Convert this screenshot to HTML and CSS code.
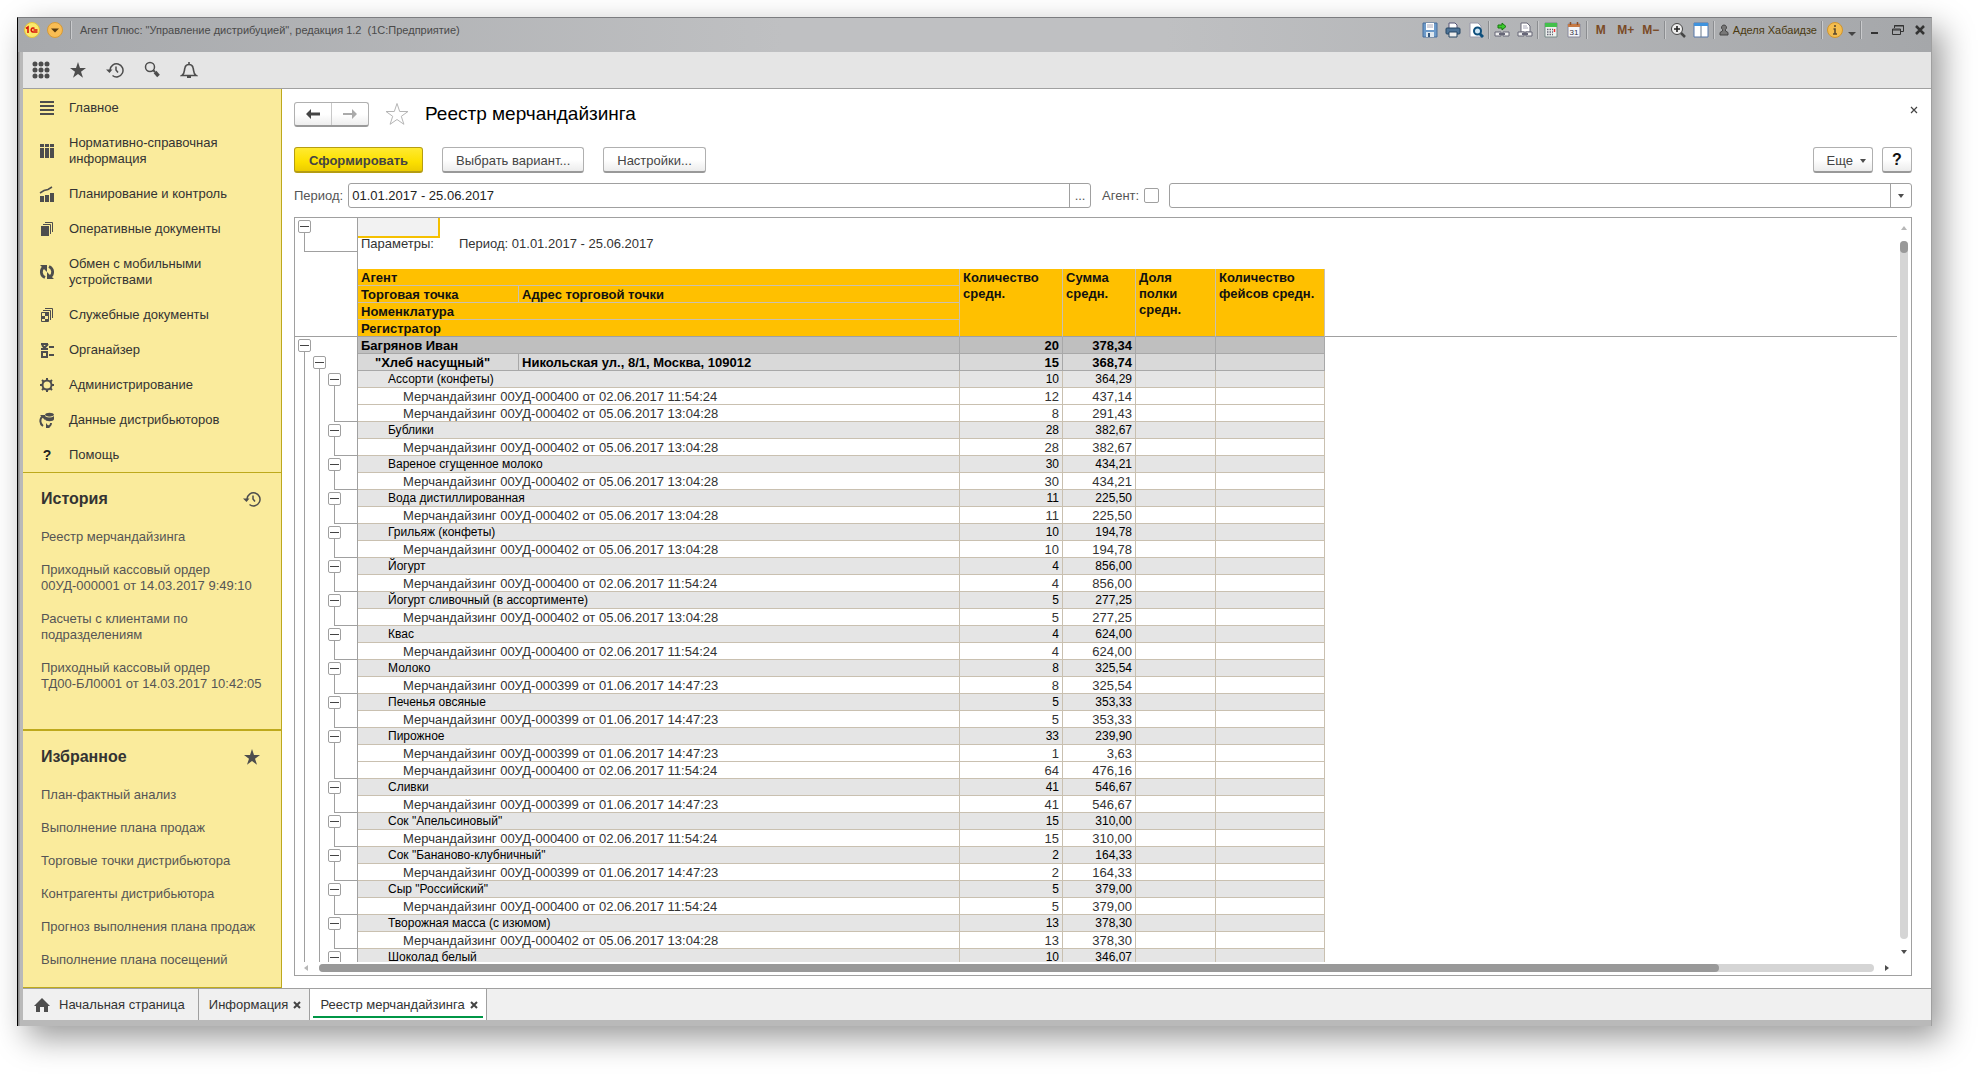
FILE: index.html
```html
<!DOCTYPE html>
<html lang="ru">
<head>
  <meta charset="UTF-8">
  <meta name="viewport" content="width=device-width, initial-scale=1.0">
  <title>Реестр мерчандайзинга</title>
  <link rel="stylesheet" href="styles.css">
</head>
<body>
  <!-- Shared icons -->
  <svg class="sprite" aria-hidden="true">
    <symbol id="star" viewBox="0 0 18 18"><path d="M9 1l2 6h6l-5 3.700 2 6-5-3.700-5 3.700 2-6-5-3.700h6z"/></symbol>
    <symbol id="clock" viewBox="0 0 18 18"><path d="M4 9a6.500 6.500 0 1 1 2.500 5.500M10 5.500V9l2 2.500" fill="none" stroke="#4d4d4d" stroke-width="1.500"/><path d="M0 8.500h6.500L3.500 12z"/></symbol>
    <symbol id="cross" viewBox="0 0 8 8"><path d="M1 1l6 6m0-6L1 7" fill="none" stroke="#444" stroke-width="2"/></symbol>
    <symbol id="down" viewBox="0 0 6 4"><path d="M0 0h6L3 4z"/></symbol>
  </svg>

  <div class="window">
    <!-- Title bar -->
    <header class="titlebar">
      <svg class="logo" viewBox="0 0 16 16"><circle cx="8" cy="8" r="7.500" fill="#fbe96b" stroke="#e3c33c"/><path d="M2 6.500l2-1.500v6M10.500 6.500A2 2 0 1 0 9 10h4.500M9.500 8h4" fill="none" stroke="#d8130b" stroke-width="1.600"/></svg>
      <button class="round" aria-label="Меню"><svg viewBox="0 0 16 16"><circle cx="8" cy="8" r="7.500" fill="#f9bd54" stroke="#d69a38"/><path d="M4 6.500h8l-4 4z" fill="#5a3c10"/></svg></button>
      <i class="sep"></i>
      <span class="app-name">Агент Плюс: "Управление дистрибуцией", редакция 1.2&nbsp; (1С:Предприятие)</span>
      <div class="tools">
        <button aria-label="Сохранить"><svg viewBox="0 0 16 16"><path d="M1 1h14v14H1z" fill="#6d9ac9" stroke="#476d9b"/><path d="M4 1h8v7H4z" fill="#fff"/><path d="M5 3h6M5 5h6" stroke="#aab"/><path d="M4 10h8v5H4z" fill="#dfe8ef"/><path d="M6 11h2v4H6z" fill="#36587f"/></svg></button>
        <button aria-label="Печать"><svg viewBox="0 0 16 16"><path d="M4 1h6l2 2v4H4z" fill="#fff" stroke="#557"/><rect x="1" y="6" width="14" height="6" rx="1" fill="#4d7397" stroke="#264764"/><path d="M4 10h8v5H4z" fill="#eee" stroke="#264764"/></svg></button>
        <button aria-label="Просмотр"><svg viewBox="0 0 16 16"><path d="M2 1h8l3 3v11H2z" fill="#fff" stroke="#99a"/><circle cx="9.500" cy="9" r="3.500" fill="#cfe6f4" stroke="#0d4f7c" stroke-width="2"/><path d="M12 12l3 3" stroke="#0d4f7c" stroke-width="3"/></svg></button>
        <i class="sep"></i>
        <button aria-label="Получить ссылку"><svg viewBox="0 0 16 16"><path d="M1 10h6v4H1zM9 10h6v4H9z" fill="#eee" stroke="#667"/><path d="M5 12h6" stroke="#667" stroke-width="2"/><path d="M4 3h4V1l4 3.500L8 8V6H4z" fill="#3ccb2d" stroke="#16780e"/></svg></button>
        <button aria-label="Перейти по ссылке"><svg viewBox="0 0 16 16"><path d="M4 1h6l3 3v6H4z" fill="#fff" stroke="#667"/><path d="M6 4h4M6 6h5" stroke="#aab"/><path d="M1 10h6v4H1zM9 10h6v4H9z" fill="#eee" stroke="#667"/><path d="M5 12h6" stroke="#667" stroke-width="2"/></svg></button>
        <i class="sep"></i>
        <button aria-label="Калькулятор"><svg viewBox="0 0 16 16"><path d="M2 1h12v14H2z" fill="#eef1ee" stroke="#788"/><path d="M2 1h12v4H2z" fill="#43c04c"/><path d="M4 7.500h6M4 10h6M4 12.500h6" stroke="#667" stroke-width="1.500" stroke-dasharray="1.500 1"/><path d="M11.500 7v3" stroke="#e33" stroke-width="1.500"/></svg></button>
        <button aria-label="Календарь"><svg viewBox="0 0 16 16"><path d="M2 2h12v13H2z" fill="#f4f6fa" stroke="#889"/><path d="M2 2h12v3H2z" fill="#c67a45"/><path d="M4.500 0v3M11.500 0v3" stroke="#8a4e26" stroke-width="1.500"/><text class="day" x="8" y="13">31</text></svg></button>
        <i class="sep"></i>
        <button class="mem">M</button>
        <button class="mem">M+</button>
        <button class="mem">M−</button>
        <i class="sep"></i>
        <button aria-label="Масштаб"><svg viewBox="0 0 16 16"><circle cx="7" cy="7" r="5.500" fill="#eee" stroke="#444"/><path d="M4 7h6M7 4v6" stroke="#222" stroke-width="1.600"/><path d="M11 11l4 4" stroke="#444" stroke-width="2.500"/></svg></button>
        <button aria-label="Панели"><svg viewBox="0 0 16 16"><path d="M1 1h14v14H1z" fill="#fff" stroke="#57a"/><path d="M1 1h14v3H1z" fill="#3f93de"/><path d="M8 4v11" stroke="#678"/></svg></button>
        <i class="sep"></i>
        <a class="user" href="#"><svg viewBox="0 0 10 12"><path d="M5 1a2.500 2.500 0 0 1 1.500 4.500V7L9 8.500V11H1V8.500L3.500 7V5.500A2.500 2.500 0 0 1 5 1z" fill="#777" stroke="#444"/></svg>Аделя Хабаидзе</a>
        <i class="sep"></i>
        <button aria-label="Информация"><svg viewBox="0 0 16 16"><circle cx="8" cy="8" r="7.500" fill="#f4bd4e" stroke="#cf9430"/><path d="M8 3v2M6.500 7H8v5M6 12h4" fill="none" stroke="#5b4a30" stroke-width="1.600"/></svg></button>
        <button class="slim" aria-label="Еще"><svg viewBox="0 0 8 16"><path d="M0 10h8l-4 4z" fill="#444"/></svg></button>
        <i class="sep"></i>
        <button class="win" aria-label="Свернуть"><svg viewBox="0 0 16 16"><path d="M5 11h7" stroke="#333" stroke-width="2"/></svg></button>
        <button class="win" aria-label="Восстановить"><svg viewBox="0 0 16 16"><path d="M5.500 6V3.500h9v6H12M5 4h10M3.500 7h8v5.500h-8zM3 8h9" fill="none" stroke="#333"/></svg></button>
        <button class="win" aria-label="Закрыть"><svg viewBox="0 0 16 16"><path d="M4 4l8 8m0-8l-8 8" stroke="#333" stroke-width="2.500"/></svg></button>
      </div>
    </header>

    <!-- Toolbar -->
    <nav class="toolbar">
      <button aria-label="Функции"><svg viewBox="0 0 18 18"><path d="M3 3h0m6 0h0m6 0h0M3 9h0m6 0h0m6 0h0M3 15h0m6 0h0m6 0h0" stroke="#4d4d4d" stroke-width="5" stroke-linecap="round"/></svg></button>
      <button aria-label="Избранное"><svg><use href="#star"/></svg></button>
      <button aria-label="История"><svg><use href="#clock"/></svg></button>
      <button aria-label="Поиск"><svg viewBox="0 0 18 18"><circle cx="7" cy="6" r="4.500" fill="none" stroke="#4d4d4d" stroke-width="1.500"/><path d="M10 9l2 2" stroke="#4d4d4d" stroke-width="2"/><path d="M12 11l3.500 4" stroke="#4d4d4d" stroke-width="3.500"/></svg></button>
      <button aria-label="Оповещения"><svg viewBox="0 0 18 18"><path d="M2 14.500c3-2 2-5 3-8 .500-2 2-3 4-3s3.500 1 4 3c1 3 0 6 3 8zM9 1v2" fill="none" stroke="#4d4d4d" stroke-width="1.600"/><path d="M7 15h4v2H7z"/></svg></button>
    </nav>

    <div class="workspace">
      <aside class="sidebar">
        <nav class="sections">
          <a href="#"><svg viewBox="0 0 16 16"><path d="M1 1h14v2H1zM1 5h14v2H1zM1 9h14v2H1zM1 13h14v2H1z"/></svg>Главное</a>
          <a href="#"><svg viewBox="0 0 16 16"><path d="M1 1h4v3H1zM6 1h4v3H6zM11 1h4v3h-4zM1 5h4v10H1zM6 5h4v10H6zM11 5h4v10h-4z"/></svg>Нормативно-справочная информация</a>
          <a href="#"><svg viewBox="0 0 16 16"><path d="M1 10h4v6H1zM6 9h4v7H6zM11 7h4v9h-4z"/><path d="M1 7l4-2.500 4-1 4-2.500" fill="none" stroke="#4d4d4d" stroke-width="1.500"/></svg>Планирование и контроль</a>
          <a href="#"><svg viewBox="0 0 16 16"><path d="M2 5h8v10H2z"/><path d="M4 3.500h7.500V13M6 1.500h7.500V11" fill="none" stroke="#4d4d4d"/></svg>Оперативные документы</a>
          <a href="#"><svg viewBox="0 0 16 16"><path d="M5 3a6 6 0 0 0 1 10.500M11 13A6 6 0 0 0 10 2.500" fill="none" stroke="#4d4d4d" stroke-width="2.800"/><path d="M1 1h7v7zM15 15H8V8z"/></svg>Обмен с мобильными устройствами</a>
          <a href="#"><svg viewBox="0 0 16 16"><path d="M2.500 5.500h7v9h-7z" fill="none" stroke="#4d4d4d"/><path d="M6 5h4v4H6zM3 9h3v3H3zM6 12h3v2H6z"/><path d="M4 3.500h7.500V13M6 1.500h7.500V11" fill="none" stroke="#4d4d4d"/></svg>Служебные документы</a>
          <a href="#"><svg viewBox="0 0 16 16"><path d="M3 10h5v5H3z" fill="none" stroke="#4d4d4d" stroke-width="2"/><path d="M2 2h7M2 7h7M3 3l2.500 3L9 2M10 5h5M10 13h5" fill="none" stroke="#4d4d4d" stroke-width="2"/></svg>Органайзер</a>
          <a href="#"><svg viewBox="0 0 16 16"><circle cx="8" cy="8" r="4.500" fill="none" stroke="#4d4d4d" stroke-width="2"/><path d="M8 1v2M8 13v2M1 8h2M13 8h2M3 3l1.500 1.500M11.500 11.500L13 13M13 3l-1.500 1.500M4.500 11.500L3 13" stroke="#4d4d4d" stroke-width="2"/></svg>Администрирование</a>
          <a href="#"><svg viewBox="0 0 16 16"><path d="M6 3c0-3 9-3 9 0v4c0 3-9 3-9 0z"/><path d="M6 3.500c2 2 7 2 9 0" fill="none" stroke="#faeb9c"/><path d="M4 4C0 7 1 12 4 14M12 11c0 3-2 3.500-4 3" fill="none" stroke="#4d4d4d" stroke-width="2"/><path d="M1 3h5v5zM7 11v5h4z"/></svg>Данные дистрибьюторов</a>
          <a href="#"><b class="question">?</b>Помощь</a>
        </nav>
        <section class="panel history">
          <h2>История <svg><use href="#clock"/></svg></h2>
          <a href="#">Реестр мерчандайзинга</a>
          <a href="#">Приходный кассовый ордер 00УД-000001 от 14.03.2017 9:49:10</a>
          <a href="#">Расчеты с клиентами по подразделениям</a>
          <a href="#">Приходный кассовый ордер<br>ТД00-БЛ0001 от 14.03.2017 10:42:05</a>
        </section>
        <section class="panel">
          <h2>Избранное <svg><use href="#star"/></svg></h2>
          <a href="#">План-фактный анализ</a>
          <a href="#">Выполнение плана продаж</a>
          <a href="#">Торговые точки дистрибьютора</a>
          <a href="#">Контрагенты дистрибьютора</a>
          <a href="#">Прогноз выполнения плана продаж</a>
          <a href="#">Выполнение плана посещений</a>
        </section>
      </aside>

      <main class="page">
        <div class="heading">
          <div class="arrows">
            <button aria-label="Назад"><svg viewBox="0 0 14 10"><path d="M5 0v3.500h9v3H5V10L0 5z" fill="#444"/></svg></button>
            <button aria-label="Вперед"><svg viewBox="0 0 14 10"><path d="M9 0v4H0v2h9v4l5-5z" fill="#aaa"/></svg></button>
          </div>
          <svg class="fav" viewBox="0 0 24 24"><path d="M12 1.500l2.700 8H23l-6.700 4.800 2.600 8L12 17.500l-6.900 4.800 2.600-8L1 9.500h8.300z" fill="#fff" stroke="#b5b5b5"/></svg>
          <h1>Реестр мерчандайзинга</h1>
          <button class="close" aria-label="Закрыть"><svg viewBox="0 0 8 8"><path d="M1 1l6 6m0-6L1 7" stroke="#444" stroke-width="1.200"/></svg></button>
        </div>

        <div class="commands">
          <button class="btn primary">Сформировать</button>
          <button class="btn">Выбрать вариант...</button>
          <button class="btn">Настройки...</button>
          <button class="btn more">Еще <svg><use href="#down"/></svg></button>
          <button class="btn help">?</button>
        </div>

        <form class="filters">
          <label for="period">Период:</label>
          <div class="field">
            <input type="text" id="period" value="01.01.2017 - 25.06.2017">
            <button type="button" aria-label="Выбрать период">...</button>
          </div>
          <label class="agent-label" for="use-agent">Агент:</label>
          <input type="checkbox" id="use-agent">
          <div class="field">
            <input type="text" aria-label="Агент">
            <button type="button" class="drop" aria-label="Выбрать агента"><svg><use href="#down"/></svg></button>
          </div>
        </form>

        <!-- Report -->
        <div class="sheet">
          <div class="grid">
            <table class="report">
              <colgroup>
                <col class="c-tree"><col class="c-name"><col class="c-address"><col class="c-qty"><col class="c-sum"><col class="c-share"><col class="c-faces"><col>
              </colgroup>
              <thead>
                <tr class="blank"><td class="tree l1 box"><button></button></td><td colspan="7"><div class="selected"></div></td></tr>
                <tr class="blank"><td class="tree l1 end"></td><td colspan="7"><span class="param">Параметры:</span>Период: 01.01.2017 - 25.06.2017</td></tr>
                <tr class="blank"><td class="tree"></td><td colspan="7"></td></tr>
                <tr><td class="tree"></td><th colspan="2">Агент</th><th rowspan="4">Количество средн.</th><th rowspan="4">Сумма средн.</th><th rowspan="4">Доля полки средн.</th><th rowspan="4">Количество фейсов средн.</th><td class="void"></td></tr>
                <tr><td class="tree"></td><th>Торговая точка</th><th>Адрес торговой точки</th><td class="void"></td></tr>
                <tr><td class="tree"></td><th colspan="2">Номенклатура</th><td class="void"></td></tr>
                <tr class="freeze"><td class="tree"></td><th colspan="2">Регистратор</th><td class="void"></td></tr>
              </thead>
              <tbody>
                <tr class="agent"><td class="tree l1 box"><button></button></td><td colspan="2">Багрянов Иван</td><td>20</td><td>378,34</td><td></td><td></td></tr>
                <tr class="store"><td class="tree l2 box"><button></button></td><td>"Хлеб насущный"</td><td>Никольская ул., 8/1, Москва, 109012</td><td>15</td><td>368,74</td><td></td><td></td></tr>
                <tr class="item"><td class="tree l3 box"><button></button></td><td colspan="2">Ассорти (конфеты)</td><td>10</td><td>364,29</td><td></td><td></td></tr>
                <tr class="doc"><td class="tree l3"></td><td colspan="2">Мерчандайзинг 00УД-000400 от 02.06.2017 11:54:24</td><td>12</td><td>437,14</td><td></td><td></td></tr>
                <tr class="doc"><td class="tree l3 end"></td><td colspan="2">Мерчандайзинг 00УД-000402 от 05.06.2017 13:04:28</td><td>8</td><td>291,43</td><td></td><td></td></tr>
                <tr class="item"><td class="tree l3 box"><button></button></td><td colspan="2">Бублики</td><td>28</td><td>382,67</td><td></td><td></td></tr>
                <tr class="doc"><td class="tree l3 end"></td><td colspan="2">Мерчандайзинг 00УД-000402 от 05.06.2017 13:04:28</td><td>28</td><td>382,67</td><td></td><td></td></tr>
                <tr class="item"><td class="tree l3 box"><button></button></td><td colspan="2">Вареное сгущенное молоко</td><td>30</td><td>434,21</td><td></td><td></td></tr>
                <tr class="doc"><td class="tree l3 end"></td><td colspan="2">Мерчандайзинг 00УД-000402 от 05.06.2017 13:04:28</td><td>30</td><td>434,21</td><td></td><td></td></tr>
                <tr class="item"><td class="tree l3 box"><button></button></td><td colspan="2">Вода дистиллированная</td><td>11</td><td>225,50</td><td></td><td></td></tr>
                <tr class="doc"><td class="tree l3 end"></td><td colspan="2">Мерчандайзинг 00УД-000402 от 05.06.2017 13:04:28</td><td>11</td><td>225,50</td><td></td><td></td></tr>
                <tr class="item"><td class="tree l3 box"><button></button></td><td colspan="2">Грильяж (конфеты)</td><td>10</td><td>194,78</td><td></td><td></td></tr>
                <tr class="doc"><td class="tree l3 end"></td><td colspan="2">Мерчандайзинг 00УД-000402 от 05.06.2017 13:04:28</td><td>10</td><td>194,78</td><td></td><td></td></tr>
                <tr class="item"><td class="tree l3 box"><button></button></td><td colspan="2">Йогурт</td><td>4</td><td>856,00</td><td></td><td></td></tr>
                <tr class="doc"><td class="tree l3 end"></td><td colspan="2">Мерчандайзинг 00УД-000400 от 02.06.2017 11:54:24</td><td>4</td><td>856,00</td><td></td><td></td></tr>
                <tr class="item"><td class="tree l3 box"><button></button></td><td colspan="2">Йогурт сливочный (в ассортименте)</td><td>5</td><td>277,25</td><td></td><td></td></tr>
                <tr class="doc"><td class="tree l3 end"></td><td colspan="2">Мерчандайзинг 00УД-000402 от 05.06.2017 13:04:28</td><td>5</td><td>277,25</td><td></td><td></td></tr>
                <tr class="item"><td class="tree l3 box"><button></button></td><td colspan="2">Квас</td><td>4</td><td>624,00</td><td></td><td></td></tr>
                <tr class="doc"><td class="tree l3 end"></td><td colspan="2">Мерчандайзинг 00УД-000400 от 02.06.2017 11:54:24</td><td>4</td><td>624,00</td><td></td><td></td></tr>
                <tr class="item"><td class="tree l3 box"><button></button></td><td colspan="2">Молоко</td><td>8</td><td>325,54</td><td></td><td></td></tr>
                <tr class="doc"><td class="tree l3 end"></td><td colspan="2">Мерчандайзинг 00УД-000399 от 01.06.2017 14:47:23</td><td>8</td><td>325,54</td><td></td><td></td></tr>
                <tr class="item"><td class="tree l3 box"><button></button></td><td colspan="2">Печенья овсяные</td><td>5</td><td>353,33</td><td></td><td></td></tr>
                <tr class="doc"><td class="tree l3 end"></td><td colspan="2">Мерчандайзинг 00УД-000399 от 01.06.2017 14:47:23</td><td>5</td><td>353,33</td><td></td><td></td></tr>
                <tr class="item"><td class="tree l3 box"><button></button></td><td colspan="2">Пирожное</td><td>33</td><td>239,90</td><td></td><td></td></tr>
                <tr class="doc"><td class="tree l3"></td><td colspan="2">Мерчандайзинг 00УД-000399 от 01.06.2017 14:47:23</td><td>1</td><td>3,63</td><td></td><td></td></tr>
                <tr class="doc"><td class="tree l3 end"></td><td colspan="2">Мерчандайзинг 00УД-000400 от 02.06.2017 11:54:24</td><td>64</td><td>476,16</td><td></td><td></td></tr>
                <tr class="item"><td class="tree l3 box"><button></button></td><td colspan="2">Сливки</td><td>41</td><td>546,67</td><td></td><td></td></tr>
                <tr class="doc"><td class="tree l3 end"></td><td colspan="2">Мерчандайзинг 00УД-000399 от 01.06.2017 14:47:23</td><td>41</td><td>546,67</td><td></td><td></td></tr>
                <tr class="item"><td class="tree l3 box"><button></button></td><td colspan="2">Сок "Апельсиновый"</td><td>15</td><td>310,00</td><td></td><td></td></tr>
                <tr class="doc"><td class="tree l3 end"></td><td colspan="2">Мерчандайзинг 00УД-000400 от 02.06.2017 11:54:24</td><td>15</td><td>310,00</td><td></td><td></td></tr>
                <tr class="item"><td class="tree l3 box"><button></button></td><td colspan="2">Сок "Бананово-клубничный"</td><td>2</td><td>164,33</td><td></td><td></td></tr>
                <tr class="doc"><td class="tree l3 end"></td><td colspan="2">Мерчандайзинг 00УД-000399 от 01.06.2017 14:47:23</td><td>2</td><td>164,33</td><td></td><td></td></tr>
                <tr class="item"><td class="tree l3 box"><button></button></td><td colspan="2">Сыр "Российский"</td><td>5</td><td>379,00</td><td></td><td></td></tr>
                <tr class="doc"><td class="tree l3 end"></td><td colspan="2">Мерчандайзинг 00УД-000400 от 02.06.2017 11:54:24</td><td>5</td><td>379,00</td><td></td><td></td></tr>
                <tr class="item"><td class="tree l3 box"><button></button></td><td colspan="2">Творожная масса (с изюмом)</td><td>13</td><td>378,30</td><td></td><td></td></tr>
                <tr class="doc"><td class="tree l3 end"></td><td colspan="2">Мерчандайзинг 00УД-000402 от 05.06.2017 13:04:28</td><td>13</td><td>378,30</td><td></td><td></td></tr>
                <tr class="item"><td class="tree l3 box"><button></button></td><td colspan="2">Шоколад белый</td><td>10</td><td>346,07</td><td></td><td></td></tr>
              </tbody>
            </table>
          </div>
          <div class="vscroll">
            <svg class="off" viewBox="0 0 6 4"><path d="M0 4h6L3 0z"/></svg>
            <div class="track"><div class="thumb"></div></div>
            <svg viewBox="0 0 6 4"><path d="M0 0h6L3 4z"/></svg>
          </div>
          <div class="hscroll">
            <svg class="off" viewBox="0 0 4 6"><path d="M4 0v6L0 3z"/></svg>
            <div class="track"><div class="thumb"></div></div>
            <svg viewBox="0 0 4 6"><path d="M0 0v6l4-3z"/></svg>
          </div>
        </div>
      </main>
    </div>

    <!-- Open tabs -->
    <footer class="tabs">
      <a class="tab home" href="#"><svg viewBox="0 0 16 14"><path d="M8 0l8 8h-2v6h-4V9H6v5H2V8H0z"/></svg>Начальная страница</a>
      <a class="tab" href="#">Информация <svg><use href="#cross"/></svg></a>
      <a class="tab active" href="#">Реестр мерчандайзинга <svg><use href="#cross"/></svg></a>
    </footer>
  </div>
</body>
</html>
```

FILE: styles.css
```css
* { box-sizing: border-box; }

body {
  margin: 0;
  height: 100vh;
  padding: 17px 48px 48px 17px;
  display: flex;
  background: #fff;
  color: #333;
  font: 13px/16px "Liberation Sans", Arial, sans-serif;
}

a { color: inherit; text-decoration: none; }

button {
  padding: 0;
  border: 0;
  background: none;
  color: inherit;
  font: inherit;
}

svg { display: block; flex: none; fill: #4d4d4d; }

.sprite { position: absolute; width: 0; height: 0; }

.window {
  flex: 1;
  min-width: 0;
  display: flex;
  flex-direction: column;
  border: 1px solid #a0a0a0;
  border-top-color: #7c7d80;
  border-left-color: #000;
  border-bottom: 0;
  background: linear-gradient(90deg, #8e8e8e 1px, #b9b9b9 2px);
  padding: 0 0 6px 5px;
  box-shadow: 10px 12px 30px rgba(0, 0, 0, .4);
}

/* Title bar */
.titlebar {
  height: 34px;
  margin-left: -5px;
  padding: 0 3px 10px 6px;
  display: flex;
  align-items: center;
  background: linear-gradient(90deg, #a7a9ac, #bfc0c2 40%, #bfc0c2 60%, #a5a7aa);
  font-size: 11px;
}

.titlebar svg { width: 16px; height: 16px; }
.titlebar .round { margin-left: 7px; }

.sep {
  width: 2px;
  height: 18px;
  border-left: 1px solid #8b8d90;
  border-right: 1px solid #c9cacc;
}

.titlebar > .sep { margin: 0 8px 0 7px; }
.app-name { color: #4a4a4a; }

.tools {
  margin-left: auto;
  display: flex;
  align-items: center;
  gap: 7px;
}

.tools .sep { margin: 0 -3px; }
.tools .slim { margin-left: -2px; }

.tools .mem {
  min-width: 18px;
  color: #7a4a26;
  font-size: 12px;
  font-weight: bold;
}

.day { font-size: 8px; text-anchor: middle; fill: #334; }

.user { display: flex; align-items: center; gap: 4px; color: #4a3a10; }
.user svg { width: 10px; height: 12px; }
.tools .slim svg { width: 8px; }

/* Toolbar */
.toolbar {
  height: 37px;
  padding: 0 9px;
  display: flex;
  align-items: center;
  gap: 19px;
  border-bottom: 1px solid #a0a0a0;
  background: #e5e5e5;
}

.toolbar svg { width: 18px; height: 18px; }

.workspace {
  flex: 1;
  min-height: 0;
  display: flex;
  background: #fff;
}

/* Sidebar */
.sidebar {
  width: 259px;
  flex: none;
  border-right: 1px solid #bda91c;
  border-bottom: 1px solid #bda91c;
  background: #faeb9c;
}

.sections {
  padding-top: 1px;
  border-bottom: 1px solid #bda91c;
}

.sections a {
  padding: 10px 40px 9px 16px;
  display: flex;
  align-items: center;
  gap: 14px;
}

.sections svg { width: 16px; height: 16px; }

.question {
  width: 16px;
  color: #222;
  font-size: 14px;
  text-align: center;
}

.panel { padding: 16px 18px 0; color: #555; }

.panel.history {
  height: 258px;
  border-bottom: 2px solid #bda91c;
}

.panel h2 {
  margin: 0 0 20px;
  display: flex;
  align-items: center;
  justify-content: space-between;
  color: #333;
  font-size: 16px;
  line-height: 20px;
}

.panel h2 svg { width: 18px; height: 18px; margin-right: 2px; }
.panel a { display: block; margin-bottom: 17px; }

/* Page */
.page {
  flex: 1;
  min-width: 0;
  padding: 12px 19px 12px 12px;
  display: flex;
  flex-direction: column;
}

.heading { display: flex; align-items: center; height: 26px; }

.arrows {
  width: 75px;
  height: 25px;
  display: flex;
  border: 1px solid #b0b0b0;
  border-bottom: 2px solid #999;
  border-radius: 3px;
  background: linear-gradient(#fff 50%, #eee);
}

.arrows button { flex: 1; display: flex; align-items: center; justify-content: center; }
.arrows button + button { border-left: 1px solid #c8c8c8; }
.arrows svg { width: 14px; height: 10px; }
.fav { width: 24px; height: 24px; margin: 0 16px; }

h1 {
  margin: 0;
  color: #000;
  font-size: 19px;
  font-weight: normal;
  line-height: 24px;
}

.close { margin: 0 -6px 8px auto; }
.close svg { width: 8px; height: 8px; }

.commands {
  margin: 20px 0 10px;
  display: flex;
  gap: 19px;
}

.btn {
  height: 26px;
  padding: 2px 13px 0;
  border: 1px solid #b0b0b0;
  border-bottom: 2px solid #999;
  border-radius: 3px;
  background: linear-gradient(#fff 50%, #ececec);
  color: #444;
}

.btn.primary {
  padding: 2px 14px 0;
  border-color: #b59d12;
  background: linear-gradient(#ffea30, #fce000 60%, #eccc00);
  font-weight: bold;
}

.btn.more { margin-left: auto; display: flex; align-items: center; gap: 7px; padding-right: 6px; }
.btn.more svg, .drop svg { width: 6px; height: 4px; }
.btn.help { width: 30px; margin-left: -10px; padding: 0; color: #111; font-size: 16px; font-weight: bold; }

.filters {
  margin-bottom: 9px;
  display: flex;
  align-items: center;
  color: #555;
}

.field {
  flex: 1;
  height: 25px;
  margin-left: 5px;
  display: flex;
  border: 1px solid #a0a0a0;
  border-radius: 3px;
  background: #fff;
}

.field input {
  flex: 1;
  min-width: 0;
  padding: 0 3px;
  border: 0;
  background: none;
  color: #222;
  font: inherit;
}

.field button {
  width: 21px;
  display: flex;
  align-items: center;
  justify-content: center;
  border-left: 1px solid #a0a0a0;
}

.agent-label { margin-left: 11px; }

input[type="checkbox"] {
  appearance: none;
  width: 15px;
  height: 15px;
  margin: 0 5px;
  border: 1px solid #a0a0a0;
  border-radius: 2px;
}

/* Report sheet */
.sheet {
  flex: 1;
  min-height: 0;
  display: grid;
  grid-template: minmax(0, 1fr) 13px / minmax(0, 1fr) 14px;
  border: 1px solid #a0a0a0;
}

.grid { overflow: hidden; }

.report {
  width: 100%;
  table-layout: fixed;
  border-spacing: 0;
}

.c-tree { width: 63px; }
.c-name { width: 161px; }
.c-address { width: 441px; }
.c-qty { width: 103px; }
.c-sum { width: 73px; }
.c-share { width: 80px; }
.c-faces { width: 109px; }

.report td, .report th {
  height: 17px;
  padding: 1px 3px 0;
  border-right: 1px solid #c9c0b0;
  border-bottom: 1px solid #c9c0b0;
  line-height: 15px;
  text-align: left;
  vertical-align: top;
  white-space: nowrap;
}

.report th {
  background: #ffc000;
  color: #111;
  white-space: normal;
}

.report th[rowspan] { line-height: 16px; }
.report .blank td, .report .void { border-right: 0; border-bottom: 0; }
.report .freeze td, .report .freeze th, .report th[rowspan] { border-bottom: 1px solid #a0a0a0; }

.param { display: inline-block; width: 98px; }

.selected {
  position: absolute;
  width: 82px;
  height: 20px;
  margin: -1px 0 0 -3px;
  border: solid #f5c000;
  border-width: 0 2px 2px 0;
  background: #f2f2f2;
}

.report tbody td:nth-last-child(-n+4) { text-align: right; }
.agent td { background: #bfbfbf; color: #000; font-weight: bold; }
.store td { background: #d9d9d9; color: #000; font-weight: bold; }
.report .agent td, .report .store td { border-color: #a8a8a8; }
.report .item td { padding-top: 0; background: #e5e5e5; color: #000; font-size: 12px; line-height: 16px; }
.report .store td:nth-child(2) { padding-left: 17px; }
.report .item td:nth-child(2) { padding-left: 30px; }
.report .doc td:nth-child(2) { padding-left: 45px; }

/* Outline of the row groups: one 1px line per open level */
.report tr .tree {
  padding: 0;
  border: 0;
  border-right: 1px solid #a0a0a0;
  background: #fff;
}

.report .freeze .tree { border-bottom: 1px solid #a0a0a0; }

.tree { --line: linear-gradient(#a0a0a0, #a0a0a0); }

.report tr .tree.l1 {
  background: var(--line) 9px 8px / 1px 9px no-repeat, #fff;
}

.report tr .tree.l1.end {
  background: var(--line) 9px 0 / 1px 100% no-repeat, var(--line) 9px 100% / 53px 1px no-repeat, #fff;
}

.report tr .tree.l2 {
  background: var(--line) 9px 0 / 1px 100% no-repeat, var(--line) 24px 8px / 1px 9px no-repeat, #fff;
}

.report tr .tree.l3 {
  background: var(--line) 9px 0 / 1px 100% no-repeat, var(--line) 24px 0 / 1px 100% no-repeat, var(--line) 39px 0 / 1px 100% no-repeat, #fff;
}

.report tr .tree.l3.box {
  background: var(--line) 9px 0 / 1px 100% no-repeat, var(--line) 24px 0 / 1px 100% no-repeat, var(--line) 39px 8px / 1px 9px no-repeat, #fff;
}

.report tr .tree.l3.end {
  background: var(--line) 9px 0 / 1px 100% no-repeat, var(--line) 24px 0 / 1px 100% no-repeat, var(--line) 39px 0 / 1px 100% no-repeat, var(--line) 39px 100% / 23px 1px no-repeat, #fff;
}

.tree button {
  display: block;
  width: 13px;
  height: 13px;
  margin: 2px 0 0 3px;
  border: 1px solid #a0a0a0;
  border-radius: 2px;
  background: linear-gradient(#444, #444) center / 9px 1px no-repeat, #fff;
}

.l2 button { margin-left: 18px; }
.l3 button { margin-left: 33px; }

/* Scroll bars */
.vscroll, .hscroll { display: flex; align-items: center; }

.vscroll {
  flex-direction: column;
  padding: 8px 0;
  gap: 11px;
}

.hscroll { padding: 0 8px 2px 9px; gap: 11px; }
.vscroll svg { width: 6px; height: 4px; }
.hscroll svg { width: 4px; height: 6px; }
.off { opacity: .4; }

.track { flex: 1; border-radius: 4px; background: #d5d5d5; }
.vscroll .track { width: 8px; }
.hscroll .track { height: 8px; }
.thumb { border-radius: 4px; background: #999; }
.vscroll .thumb { height: 12px; }
.hscroll .thumb { width: 90%; height: 8px; }

/* Tabs */
.tabs {
  height: 32px;
  display: flex;
  border-top: 1px solid #a0a0a0;
  background: #f0f0f0;
}

.tab {
  padding: 0 8px 0 10px;
  display: flex;
  align-items: center;
  gap: 5px;
  border-right: 1px solid #a0a0a0;
}

.tab svg { width: 8px; height: 8px; }
.tab.home { padding: 0 13px 0 11px; gap: 9px; }
.tab.home svg { width: 16px; height: 14px; }

.tab.active {
  background: linear-gradient(#009646, #009646) 3px 27px / calc(100% - 6px) 2px no-repeat, #fff;
}
```
